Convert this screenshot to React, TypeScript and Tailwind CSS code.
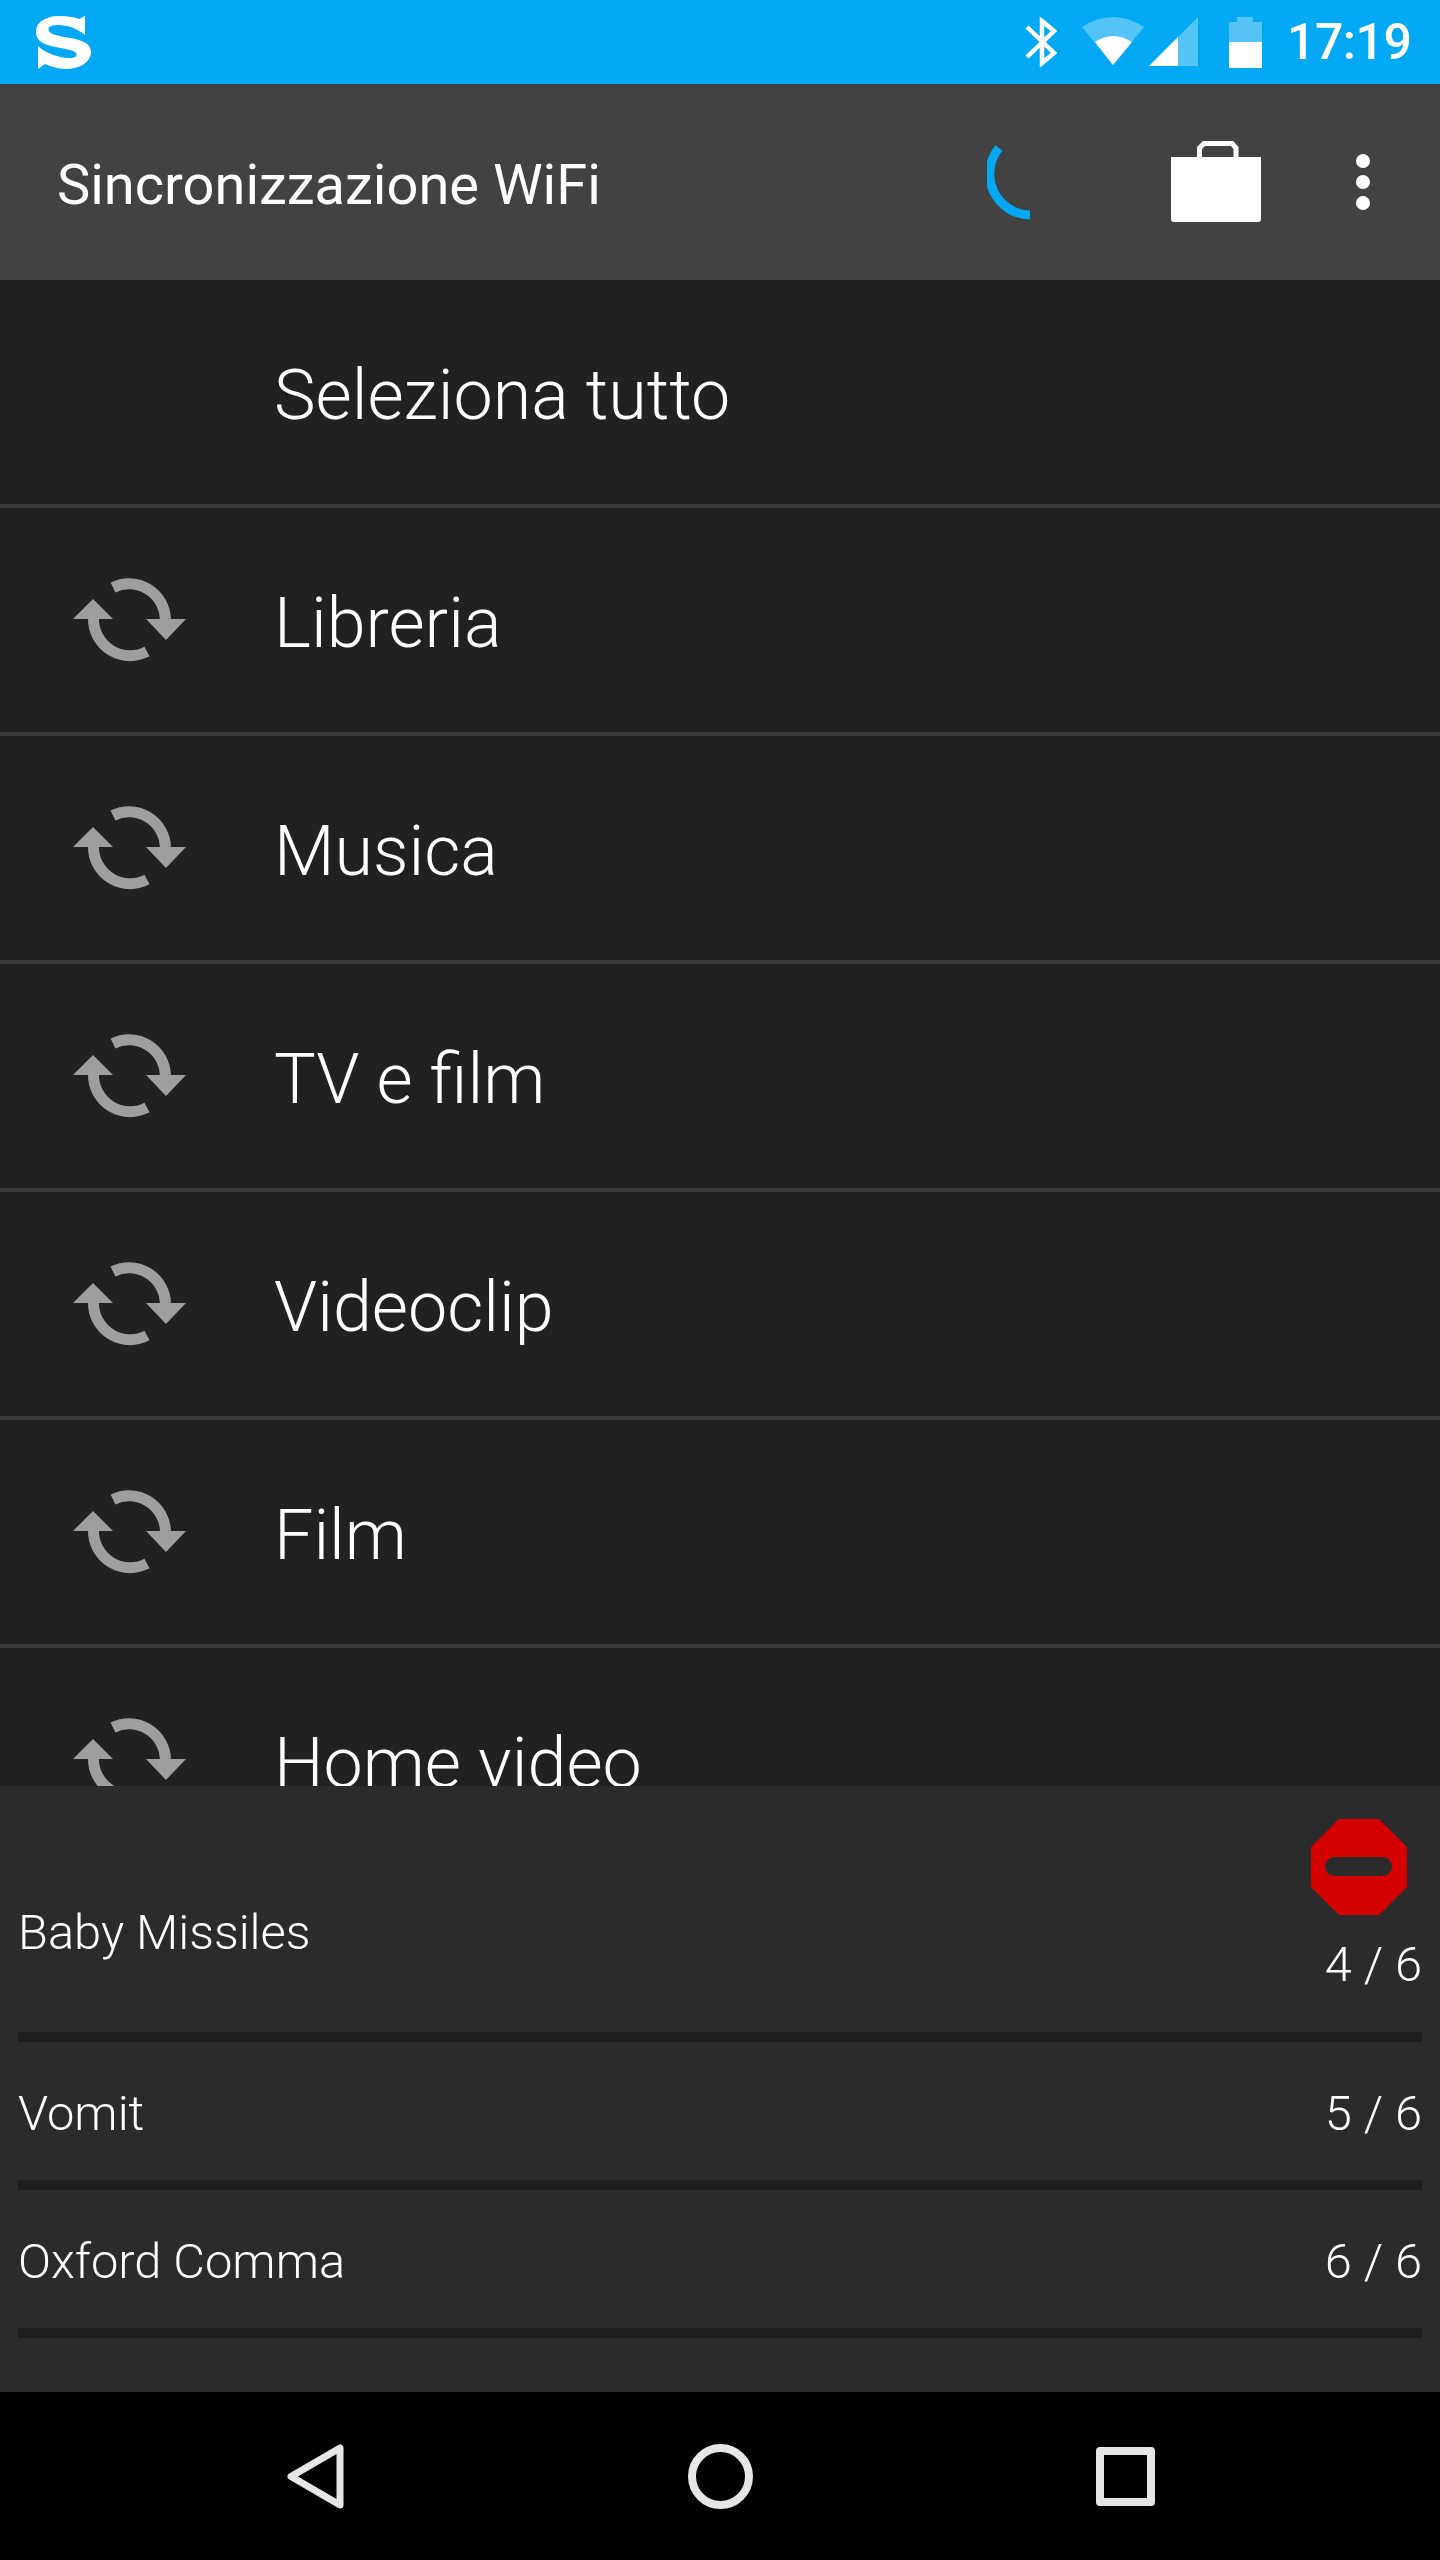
const Sync = () => (
  <svg viewBox="0 0 114 86" className="w-[114px] h-[86px] shrink-0" fill="#9e9e9e">
    <path d="M40 10.5 A36.5 36.5 0 0 1 92.5 42" fill="none" stroke="#9e9e9e" strokeWidth="11" />
    <path d="M20.5 42 A36.5 36.5 0 0 0 74 74.5" fill="none" stroke="#9e9e9e" strokeWidth="11" />
    <path d="M0 42 L20 22 L40 42 Z" />
    <path d="M73 42 L113 42 L93 63 Z" />
  </svg>
);

const Row = ({ label, icon = true, first = false }: { label: string; icon?: boolean; first?: boolean }) => (
  <div className={`flex items-center h-[224px] shrink-0 ${first ? "" : "border-t-4 border-[#3a3a3a] box-content"}`}>
    <div className="w-[274px] shrink-0 pl-[73px]">{icon && <Sync />}</div>
    <span className="text-[70px] font-light text-white leading-none pt-[6px]">{label}</span>
  </div>
);

const Track = ({ name, count, stop = false }: { name: string; count: string; stop?: boolean }) => (
  <div className="px-[18px]">
    <div className={`flex items-center justify-between ${stop ? "h-[246px]" : "h-[138px] pt-[6px]"}`}>
      <span className={`text-[48.8px] font-light text-white leading-none ${stop ? "pt-[48px]" : ""}`}>{name}</span>
      <div className={`flex flex-col items-end ${stop ? "pb-[10px]" : ""}`}>
        {stop && (
          <svg viewBox="0 0 96 96" className="w-[96px] h-[96px] mr-[15px] mb-[26px]">
            <path d="M28 0 H68 L96 28 V68 L68 96 H28 L0 68 V28 Z" fill="#d50000" />
            <rect x="14" y="38" width="67" height="19" rx="9.5" fill="#2b2b2b" />
          </svg>
        )}
        <span className="text-[48.8px] font-light text-white leading-none">{count}</span>
      </div>
    </div>
    <div className="h-[10px] bg-[#1e1e1e]" />
  </div>
);

export default function App() {
  return (
    <div className="w-[1440px] h-[2560px] flex flex-col bg-[#212121] overflow-hidden font-['Roboto',sans-serif]">
      <div className="h-[84px] shrink-0 bg-[#03a9f4] flex items-center pr-[32px]">
        <svg viewBox="0 0 55 53" className="w-[55px] h-[53px] ml-[36px]" fill="#fff">
          <path d="M49 0 V19 C42 13 32 9 22 9 C14 9 11 12 13 15 C15 19 24 20 34 22 C47 24 55 28 55 36 C55 46 44 53 30 53 C22 53 14 50 9 48 L2 53 V30 C8 36 22 42 33 42 C39 42 42 40 40 37 C38 34 28 33 20 31 C8 29 0 25 0 16 C0 6 10 0 24 0 C32 0 38 1 43 3 Z" />
        </svg>
        <div className="ml-auto flex items-center">
          <svg viewBox="0 0 32 50" className="w-[32px] h-[50px]" fill="none" stroke="#fff" strokeWidth="4.5">
            <path d="M2 10 L29 36 L17 46 V4 L29 14 L2 40" />
          </svg>
          <svg viewBox="0 0 62 50" className="w-[62px] h-[50px] ml-[25px]">
            <path d="M0 10 Q31 -10 62 10 L31 48 Z" fill="#fff" fillOpacity="0.32" />
            <path d="M13 25 Q31 13 50 25 L31 48 Z" fill="#fff" />
          </svg>
          <svg viewBox="0 0 50 50" className="w-[50px] h-[50px] ml-[5px]">
            <path d="M0 49 L49 0 V49 Z" fill="#fff" fillOpacity="0.32" />
            <path d="M0 49 L29 20 V49 Z" fill="#fff" />
          </svg>
          <svg viewBox="0 0 33 51" className="w-[33px] h-[51px] ml-[30px]">
            <path d="M8 0 H24 V5 H33 V25 H0 V5 H8 Z" fill="#fff" fillOpacity="0.32" />
            <rect x="0" y="25" width="33" height="26" fill="#fff" />
          </svg>
          <span className="ml-[25px] w-[121px] text-right text-[50px] font-medium tracking-[-0.5px] text-white leading-none">17:19</span>
        </div>
      </div>

      <div className="h-[196px] shrink-0 bg-[#424242] flex items-center pl-[57px] pr-[70px]">
        <span className="text-[56px] text-white leading-none pt-[6px]">Sincronizzazione WiFi</span>
        <svg viewBox="0 0 44 76" className="w-[44px] h-[76px] ml-auto" fill="none" stroke="#03a9f4" strokeWidth="9">
          <path d="M12 4 A41 41 0 0 0 43 71" />
        </svg>
        <svg viewBox="0 0 90 81" className="w-[90px] h-[81px] ml-[140px] mb-[1px]" fill="#fff">
          <path d="M0 16 H90 V78 Q90 81 87 81 H3 Q0 81 0 78 Z" />
          <path d="M28.5 16 V7 L33 2.5 H61 L65 7 V16" fill="none" stroke="#fff" strokeWidth="5" />
        </svg>
        <div className="ml-[95px] flex flex-col gap-[7px]">
          <div className="w-[14px] h-[14px] rounded-full bg-white" />
          <div className="w-[14px] h-[14px] rounded-full bg-white" />
          <div className="w-[14px] h-[14px] rounded-full bg-white" />
        </div>
      </div>

      <div className="flex-1 min-h-0 overflow-hidden">
        <Row label="Seleziona tutto" icon={false} first />
        <Row label="Libreria" />
        <Row label="Musica" />
        <Row label="TV e film" />
        <Row label="Videoclip" />
        <Row label="Film" />
        <Row label="Home video" />
      </div>

      <div className="h-[606px] shrink-0 bg-[#2b2b2b] flex flex-col">
        <Track name="Baby Missiles" count="4 / 6" stop />
        <Track name="Vomit" count="5 / 6" />
        <Track name="Oxford Comma" count="6 / 6" />
      </div>

      <div className="h-[168px] shrink-0 bg-black flex items-center">
        <svg viewBox="0 0 57 65" className="w-[57px] h-[65px] ml-[287px]" fill="none" stroke="#e6e6e6" strokeWidth="7" strokeLinejoin="round">
          <path d="M53 4 V61 L4 32.5 Z" />
        </svg>
        <svg viewBox="0 0 65 65" className="w-[65px] h-[65px] ml-[344px]" fill="none" stroke="#e6e6e6" strokeWidth="8">
          <circle cx="32.5" cy="32.5" r="28.5" />
        </svg>
        <svg viewBox="0 0 59 59" className="w-[59px] h-[59px] ml-[343px]" fill="none" stroke="#e6e6e6" strokeWidth="8" strokeLinejoin="round">
          <rect x="4" y="4" width="51" height="51" />
        </svg>
      </div>
    </div>
  );
}
